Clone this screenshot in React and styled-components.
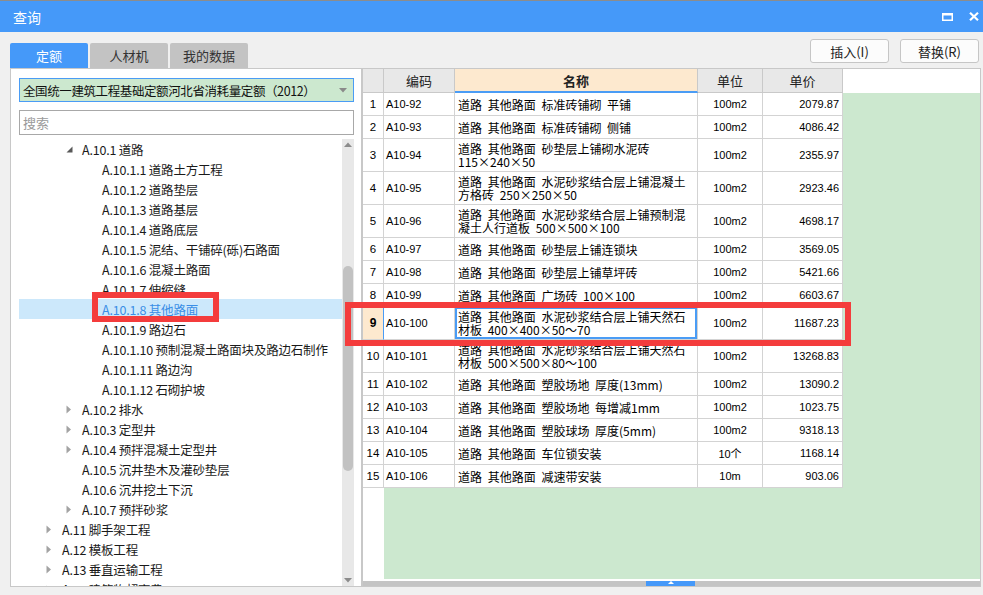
import React from "react";
import styled, { createGlobalStyle } from "styled-components";

const BLUE = "#4599f9";
const GREEN = "#cce8cf";
const PEACH = "#fde9cf";
const LINE = "#d3d3d3";

const GlobalStyle = createGlobalStyle`
  html, body {
    margin: 0;
    padding: 0;
    background: #f0f0f0;
    overflow: hidden;
  }
  body {
    font-family: "Noto Sans CJK SC", "Noto Sans", sans-serif;
  }
`;

const Window = styled.div`
  width: 983px;
  height: 595px;
  display: flex;
  flex-direction: column;
  background: #f0f0f0;
  overflow: hidden;
`;

const TitleBar = styled.div`
  height: 31px;
  border-top: 1px solid #8c8c8c;
  background: ${BLUE};
  display: flex;
  align-items: center;
  padding: 0 4px 0 13px;
  color: #fff;
  font-size: 14px;
`;

const TitleText = styled.div`
  flex: 1;
`;

const WinButtons = styled.div`
  display: flex;
  align-items: center;
  gap: 16px;
`;

const Toolbar = styled.div`
  height: 36px;
  display: flex;
  align-items: flex-end;
  padding: 0 4px 0 10px;
`;

const Tabs = styled.div`
  display: flex;
  gap: 2px;
`;

const Tab = styled.div`
  width: 78px;
  height: 25px;
  border-radius: 2px 2px 0 0;
  display: flex;
  align-items: center;
  justify-content: center;
  font-size: 13px;
  background: ${(p) => (p.$active ? BLUE : "#c3c3c3")};
  color: ${(p) => (p.$active ? "#fff" : "#333")};
`;

const Actions = styled.div`
  margin-left: auto;
  margin-bottom: 5px;
  display: flex;
  gap: 11px;
`;

const Button = styled.div`
  width: 79px;
  height: 24px;
  box-sizing: border-box;
  border: 1px solid #c6c6c6;
  border-radius: 3px;
  background: #fcfcfc;
  display: flex;
  align-items: center;
  justify-content: center;
  font-size: 13px;
  color: #222;
`;

const Content = styled.div`
  display: flex;
  padding-left: 10px;
  height: 519px;
`;

const LeftPanel = styled.div`
  width: 352px;
  box-sizing: border-box;
  border: 1px solid #c8c8c8;
  background: #fff;
  padding: 9px 7px 0 8px;
  display: flex;
  flex-direction: column;
`;

const Select = styled.div`
  height: 24px;
  flex: none;
  box-sizing: border-box;
  border: 1px solid #4a9cf5;
  background: ${GREEN};
  display: flex;
  align-items: center;
  justify-content: space-between;
  padding: 0 6px 0 3px;
  font-size: 12.5px;
  letter-spacing: -0.4px;
  color: #111;
`;

const Search = styled.div`
  margin-top: 8px;
  height: 25px;
  flex: none;
  box-sizing: border-box;
  border: 1px solid #a8a8a8;
  padding: 0 3px;
  display: flex;
  align-items: center;
  font-size: 13px;
  color: #9a9a9a;
`;

const TreeBox = styled.div`
  margin-top: 4px;
  flex: 1;
  min-height: 0;
  display: flex;
`;

const TreeList = styled.div`
  flex: 1;
  overflow: hidden;
`;

const TreeRow = styled.div`
  position: relative;
  height: 20px;
  display: flex;
  align-items: center;
  padding-left: ${(p) => 27 + p.$level * 20}px;
  background: ${(p) => (p.$selected ? "#cce8fb" : "transparent")};
  color: ${(p) => (p.$selected ? "#3a8ee6" : "#1a1a1a")};
  font-size: 12.5px;
  letter-spacing: -0.2px;
  white-space: nowrap;
`;

const Toggle = styled.span`
  width: 16px;
  flex: none;
  display: flex;
  align-items: center;
`;

const RedMark = styled.div`
  position: absolute;
  left: ${(p) => p.$left}px;
  top: ${(p) => p.$top}px;
  width: ${(p) => p.$width}px;
  height: ${(p) => p.$height}px;
  box-sizing: border-box;
  border: 6px solid #f43c3c;
  z-index: 2;
  pointer-events: none;
`;

const VScroll = styled.div`
  width: 12px;
  flex: none;
  background: #e8e8e8;
  display: flex;
  flex-direction: column;
  align-items: center;
  padding: 3px 0;
  box-sizing: border-box;
`;

const ScrollThumb = styled.div`
  width: 10px;
  height: ${(p) => p.$size}px;
  margin-top: ${(p) => p.$offset}px;
  border-radius: 5px;
  background: #c2c2c2;
`;

const Spacer = styled.div`
  flex: 1;
`;

const RightPanel = styled.div`
  width: 619px;
  box-sizing: border-box;
  border: 1px solid #c8c8c8;
  background: #fff;
  display: flex;
  flex-direction: column;
`;

const Grid = styled.div`
  flex: 1;
  min-height: 0;
  display: flex;
  flex-direction: column;
`;

const Row = styled.div`
  display: flex;
  flex: none;
  height: ${(p) => p.$h}px;
  position: relative;
`;

const HeadCell = styled.div`
  width: ${(p) => p.$w}px;
  flex: none;
  box-sizing: border-box;
  border-right: 1px solid #c9c9c9;
  border-bottom: ${(p) => (p.$hot ? `2px solid #4a9cf5` : "1px solid #c9c9c9")};
  background: ${(p) => (p.$hot ? PEACH : "#e8e8e8")};
  display: flex;
  align-items: center;
  justify-content: center;
  font-size: 13px;
  font-weight: ${(p) => (p.$hot ? 700 : 400)};
  color: #222;
`;

const Cell = styled.div`
  width: ${(p) => p.$w}px;
  flex: none;
  box-sizing: border-box;
  border-right: 1px solid ${LINE};
  border-bottom: 1px solid ${LINE};
  display: flex;
  align-items: center;
  justify-content: ${(p) => p.$align || "flex-start"};
  color: #000;
`;

const NumCell = styled(Cell)`
  font-family: "Liberation Sans", "Noto Sans CJK SC", sans-serif;
  font-size: 11px;
  padding: ${(p) => (p.$align === "flex-end" ? "0 3px 0 0" : p.$align === "center" ? "0" : "0 0 0 2px")};
`;

const IndexCell = styled(Cell)`
  justify-content: center;
  font-family: "Liberation Sans", sans-serif;
  font-size: ${(p) => (p.$active ? "12px" : "11.5px")};
  font-weight: ${(p) => (p.$active ? 700 : 400)};
  background: ${(p) => (p.$active ? PEACH : "#fff")};
  border-right-color: ${(p) => (p.$active ? "#4a9cf5" : LINE)};
`;

const NameCell = styled(Cell)`
  padding-left: 3px;
  font-size: 12px;
  line-height: 13px;
  white-space: pre;
  word-spacing: 3px;
  overflow: hidden;
  box-shadow: ${(p) => (p.$focus ? "inset 0 0 0 2px #4a9cf5" : "none")};
`;

const RestCell = styled.div`
  flex: 1;
  background: ${(p) => (p.$head ? "#fff" : GREEN)};
`;

const Filler = styled.div`
  flex: 1;
  display: flex;
`;

const FillerGutter = styled.div`
  width: 21px;
  background: #fff;
`;

const HScroll = styled.div`
  margin-top: 2px;
  height: 5px;
  flex: none;
  background: #c4c4c4;
  display: flex;
`;

const HThumb = styled.div`
  margin-left: ${(p) => p.$offset}px;
  width: ${(p) => p.$size}px;
  background: ${BLUE};
  display: flex;
  justify-content: center;
  align-items: flex-start;
`;

const COLS = { idx: 21, code: 71, name: 243, unit: 65, price: 80 };

const tree = [
  { level: 1, label: "A.10.1 道路", toggle: "open" },
  { level: 2, label: "A.10.1.1 道路土方工程" },
  { level: 2, label: "A.10.1.2 道路垫层" },
  { level: 2, label: "A.10.1.3 道路基层" },
  { level: 2, label: "A.10.1.4 道路底层" },
  { level: 2, label: "A.10.1.5 泥结、干铺碎(砾)石路面" },
  { level: 2, label: "A.10.1.6 混凝土路面" },
  { level: 2, label: "A.10.1.7 伸缩缝" },
  { level: 2, label: "A.10.1.8 其他路面", selected: true },
  { level: 2, label: "A.10.1.9 路边石" },
  { level: 2, label: "A.10.1.10 预制混凝土路面块及路边石制作" },
  { level: 2, label: "A.10.1.11 路边沟" },
  { level: 2, label: "A.10.1.12 石砌护坡" },
  { level: 1, label: "A.10.2 排水", toggle: "closed" },
  { level: 1, label: "A.10.3 定型井", toggle: "closed" },
  { level: 1, label: "A.10.4 预拌混凝土定型井", toggle: "closed" },
  { level: 1, label: "A.10.5 沉井垫木及灌砂垫层" },
  { level: 1, label: "A.10.6 沉井挖土下沉" },
  { level: 1, label: "A.10.7 预拌砂浆", toggle: "closed" },
  { level: 0, label: "A.11 脚手架工程", toggle: "closed" },
  { level: 0, label: "A.12 模板工程", toggle: "closed" },
  { level: 0, label: "A.13 垂直运输工程", toggle: "closed" },
  { level: 0, label: "A.14 建筑物超高费", toggle: "closed" },
];

const rows = [
  ["A10-92", "道路 其他路面 标准砖铺砌 平铺", "100m2", "2079.87"],
  ["A10-93", "道路 其他路面 标准砖铺砌 侧铺", "100m2", "4086.42"],
  ["A10-94", "道路 其他路面 砂垫层上铺砌水泥砖\n115×240×50", "100m2", "2355.97"],
  ["A10-95", "道路 其他路面 水泥砂浆结合层上铺混凝土\n方格砖 250×250×50", "100m2", "2923.46"],
  ["A10-96", "道路 其他路面 水泥砂浆结合层上铺预制混\n凝土人行道板 500×500×100", "100m2", "4698.17"],
  ["A10-97", "道路 其他路面 砂垫层上铺连锁块", "100m2", "3569.05"],
  ["A10-98", "道路 其他路面 砂垫层上铺草坪砖", "100m2", "5421.66"],
  ["A10-99", "道路 其他路面 广场砖 100×100", "100m2", "6603.67"],
  ["A10-100", "道路 其他路面 水泥砂浆结合层上铺天然石\n材板 400×400×50～70", "100m2", "11687.23"],
  ["A10-101", "道路 其他路面 水泥砂浆结合层上铺天然石\n材板 500×500×80～100", "100m2", "13268.83"],
  ["A10-102", "道路 其他路面 塑胶场地 厚度(13mm)", "100m2", "13090.2"],
  ["A10-103", "道路 其他路面 塑胶场地 每增减1mm", "100m2", "1023.75"],
  ["A10-104", "道路 其他路面 塑胶球场 厚度(5mm)", "100m2", "9318.13"],
  ["A10-105", "道路 其他路面 车位锁安装", "10个", "1168.14"],
  ["A10-106", "道路 其他路面 减速带安装", "10m", "903.06"],
];

const SELECTED_ROW = 9;

const MaxIcon = () => (
  <svg width="11" height="8" viewBox="0 0 11 8">
    <rect x="0.75" y="0.75" width="9.5" height="6.5" fill="none" stroke="#fff" strokeWidth="1.5" />
    <rect x="0" y="0" width="11" height="2.5" fill="#fff" />
  </svg>
);

const CloseIcon = () => (
  <svg width="10" height="9" viewBox="0 0 10 9">
    <path d="M1 0.8 L9 8.2 M9 0.8 L1 8.2" stroke="#fff" strokeWidth="2.2" />
  </svg>
);

const OpenArrow = () => (
  <svg width="7" height="7" viewBox="0 0 7 7">
    <polygon points="6.5,0.5 6.5,6.5 0.5,6.5" fill="#595959" />
  </svg>
);

const ClosedArrow = () => (
  <svg width="6" height="9" viewBox="0 0 6 9">
    <polygon points="0.5,0.5 5,4.5 0.5,8.5" fill="#a3a3a3" />
  </svg>
);

const Caret = ({ up, color = "#8a8a8a" }) => (
  <svg width="8" height="5" viewBox="0 0 8 5">
    <polygon points={up ? "0,5 4,0.5 8,5" : "0,0 8,0 4,4.5"} fill={color} />
  </svg>
);

const TreeItem = ({ item }) => (
  <TreeRow $level={item.level} $selected={item.selected}>
    <Toggle>
      {item.toggle === "open" && <OpenArrow />}
      {item.toggle === "closed" && <ClosedArrow />}
    </Toggle>
    {item.label}
    {item.selected && <RedMark $left={73} $top={-7} $width={127} $height={30} />}
  </TreeRow>
);

const DataRow = ({ index, row }) => {
  const [code, name, unit, price] = row;
  const active = index === SELECTED_ROW;
  const h = name.includes("\n") ? 33 : 23;
  return (
    <Row $h={h}>
      <IndexCell $w={COLS.idx} $active={active}>{index}</IndexCell>
      <NumCell $w={COLS.code}>{code}</NumCell>
      <NameCell $w={COLS.name} $focus={active}>{name}</NameCell>
      <NumCell $w={COLS.unit} $align="center">{unit}</NumCell>
      <NumCell $w={COLS.price} $align="flex-end">{price}</NumCell>
      <RestCell />
      {active && <RedMark $left={-18} $top={-5} $width={506} $height={44} />}
    </Row>
  );
};

const App = () => {
  return (
    <>
      <GlobalStyle />
      <Window>
        <TitleBar>
          <TitleText>查询</TitleText>
          <WinButtons>
            <MaxIcon />
            <CloseIcon />
          </WinButtons>
        </TitleBar>

        <Toolbar>
          <Tabs>
            <Tab $active>定额</Tab>
            <Tab>人材机</Tab>
            <Tab>我的数据</Tab>
          </Tabs>
          <Actions>
            <Button>插入(I)</Button>
            <Button>替换(R)</Button>
          </Actions>
        </Toolbar>

        <Content>
          <LeftPanel>
            <Select>
              <span>全国统一建筑工程基础定额河北省消耗量定额（2012）</span>
              <Caret />
            </Select>
            <Search>搜索</Search>
            <TreeBox>
              <TreeList>
                {tree.map((item) => (
                  <TreeItem key={item.label} item={item} />
                ))}
              </TreeList>
              <VScroll>
                <Caret up color="#8c8c8c" />
                <ScrollThumb $offset={119} $size={205} />
                <Spacer />
                <Caret color="#8c8c8c" />
              </VScroll>
            </TreeBox>
          </LeftPanel>

          <RightPanel>
            <Grid>
              <Row $h={24}>
                <HeadCell $w={COLS.idx} />
                <HeadCell $w={COLS.code}>编码</HeadCell>
                <HeadCell $w={COLS.name} $hot>名称</HeadCell>
                <HeadCell $w={COLS.unit}>单位</HeadCell>
                <HeadCell $w={COLS.price}>单价</HeadCell>
                <RestCell $head />
              </Row>
              {rows.map((row, i) => (
                <DataRow key={row[0]} index={i + 1} row={row} />
              ))}
              <Filler>
                <FillerGutter />
                <RestCell />
              </Filler>
            </Grid>
            <HScroll>
              <HThumb $offset={283} $size={49}>
                <svg width="6" height="3" viewBox="0 0 6 3">
                  <polygon points="0,3 3,0 6,3" fill="#fff" />
                </svg>
              </HThumb>
            </HScroll>
          </RightPanel>
        </Content>
      </Window>
    </>
  );
};

export default App;
